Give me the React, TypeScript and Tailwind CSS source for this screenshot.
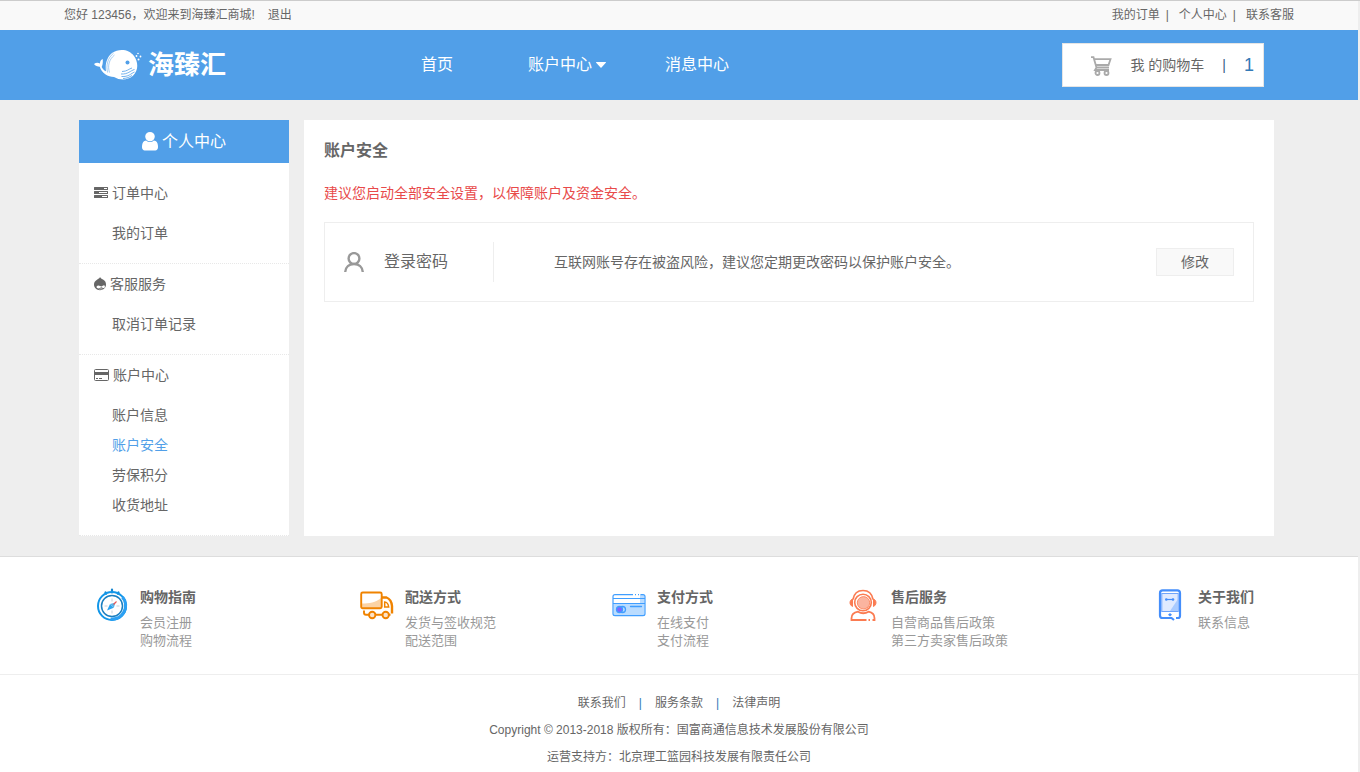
import type { ReactNode } from "react";

interface SideGroup {
  title: string;
  icon: ReactNode;
  items: string[];
}

interface HelpColumn {
  title: string;
  icon: ReactNode;
  links: string[];
}

const ACTIVE_ITEM = "账户安全";

function WhaleLogo() {
  return (
    <svg viewBox="0 0 48 32" className="w-12 h-8 shrink-0" fill="none" aria-hidden="true">
      <path
        d="M0 15c2-1.600 4.200-1.500 6-.5 0-2.200.8-3.600 2.700-4.500.4 3.500-.2 6-1 8 1.100 2.400 2.600 3.700 4.300 4.300C11 16 12.500 8.500 18 4 25-.8 35 0 40 7c4.500 6.300 4.500 14.500-1 19.700-5.500 4.800-13 4.700-19 1.200-6 0-12.500-3.900-14.200-10.200C3.500 17.300 1.200 17 0 15z"
        fill="#fff"
      />
      <path d="M13.600 23.500C11.800 17 13.500 9 19.500 4.300M15.500 23.500c-2-6.500-.6-13 5-17.500" stroke="#519fe8" strokeWidth=".5" />
      <circle cx="33.500" cy="13.500" r="2" fill="#519fe8" />
      <path
        d="M40.500 20.500c-4 1-6.500 5-13.500 4.500M40.500 23c-3.500 1.500-6 5-13 4.500M38 26.500c-2.500 1.500-5 3-9 3M38 19c-3 .8-5 3.500-10 3.500"
        stroke="#519fe8"
        strokeWidth=".8"
      />
      <circle cx="44" cy="4.500" r=".8" fill="#fff" />
      <circle cx="42.500" cy="7" r=".9" fill="#fff" />
      <circle cx="46.500" cy="7.500" r=".9" fill="#fff" />
      <circle cx="44.500" cy="10.500" r="1" fill="#fff" />
    </svg>
  );
}

function CartIcon() {
  return (
    <svg viewBox="0 -2 22 22" className="w-[22px] h-[22px] shrink-0" fill="none" stroke="#aaa" strokeWidth="1.800" aria-hidden="true">
      <path d="M1 1.200h2.500l3 10.300H19M4.500 3.200h16L18.500 9H6M6.500 11.500 5 14h14" />
      <circle cx="7.500" cy="17" r="2" />
      <circle cx="16.500" cy="17" r="2" />
    </svg>
  );
}

function UserSolidIcon() {
  return (
    <svg viewBox="256 128 1280 1664" className="w-4 h-5 shrink-0" fill="currentColor" preserveAspectRatio="none" aria-hidden="true">
      <path d="M1536 1399q0 109-62.500 187T1323 1664H469q-88 0-150.500-78T256 1399q0-85 8.500-160.500t31.500-152 58.500-131 94-89T583 832q131 128 313 128t313-128q76 0 134.500 34.500t94 89 58.500 131 31.500 152 8.500 160.500zm-256-887q0 159-112.500 271.500T896 896 624.500 783.500 512 512t112.500-271.500T896 128t271.500 112.500T1280 512z" />
    </svg>
  );
}

function TasksIcon() {
  return (
    <svg viewBox="0 0 14 14" className="w-[14px] h-[14px]" aria-hidden="true">
      <path
        d="M.5 1h13a.5.500 0 0 1 .5.500v2a.5.500 0 0 1-.5.500H.5a.5.500 0 0 1-.5-.5v-2A.5.500 0 0 1 .5 1zM.5 5h13a.5.500 0 0 1 .5.500v2a.5.500 0 0 1-.5.500H.5a.5.500 0 0 1-.5-.5v-2A.5.500 0 0 1 .5 5zM.5 9h13a.5.500 0 0 1 .5.500v2a.5.500 0 0 1-.5.500H.5a.5.500 0 0 1-.5-.5v-2A.5.500 0 0 1 .5 9z"
        fill="#666"
      />
      <path d="M10 2h3v1h-3zM5 6h8v1H5zM8 10h5v1H8z" fill="#fff" />
    </svg>
  );
}

function DropletIcon() {
  return (
    <svg viewBox="0 0 12 14" className="w-3 h-[14px]" fill="none" aria-hidden="true">
      <path d="M6 0c.6 1.400 1.600 1.700 3 2.600C11 3.900 12 5.300 12 7.500c0 3.200-2.700 5.700-6 5.700s-6-2.500-6-5.700c0-2.200 1.100-3.600 3-4.800C4.400 1.800 5.500 1.400 6 0z" fill="#666" />
      <path d="M2.600 10.300c-.2-1.200.7-1.900 1.700-1.900 1.500 0 2.200 1 3.100 1 .9 0 1.600-1.200 2.600-1.200.7 0 1 .8.9 1.500-.1.800-.6 1.300-1.200 1.300-.8 0-1.600-.8-2.300-.8s-1.700 1.200-3 1.200c-1 0-1.700-.4-1.800-1.100z" fill="#fff" />
      <path d="M5.300 12.300c1-.6 2.400-.6 3.200-.2" stroke="#fff" strokeWidth=".6" />
    </svg>
  );
}

function CreditCardIcon() {
  return (
    <svg viewBox="0 0 15 14" className="w-[15px] h-[14px]" fill="none" aria-hidden="true">
      <rect x=".5" y="1.500" width="14" height="11" rx="1" stroke="#666" />
      <path d="M1 4h13v3H1zM2 10h2v1H2zM5 10h3v1H5z" fill="#666" />
    </svg>
  );
}

function UserOutlineIcon() {
  return (
    <svg viewBox="0 0 20 20" className="w-5 h-5 shrink-0" fill="none" stroke="#999" strokeWidth="2.400" aria-hidden="true">
      <circle cx="10" cy="6.500" r="5.400" />
      <path d="M1.200 20c.3-5 4-8 8.800-8s8.500 3 8.800 8" />
    </svg>
  );
}

function CompassIcon() {
  return (
    <svg viewBox="0 0 32 34" className="w-8 h-[34px]" fill="none" aria-hidden="true">
      <path d="M16 1.500v3M9.500 4.500l.6 1.200M22.500 4.500l-.6 1.200" stroke="#1787cf" strokeWidth="2.200" strokeLinecap="round" />
      <circle cx="16" cy="18" r="14" stroke="#1296e8" strokeWidth="2" />
      <path d="M26.500 9a13.500 13.500 0 0 1-12 22" stroke="#2ba0f3" strokeWidth="3.200" />
      <circle cx="16" cy="18" r="10.500" fill="#fff" stroke="#1a7fc0" strokeWidth="1.500" />
      <path d="M16 10.500v3M16 22.500v3M8.500 18h3M20.500 18h3" stroke="#c3d0d9" />
      <path d="m11 22.500 3-6.500 3.800 3.800z" fill="#2da4ef" />
      <path d="m19.500 14.500-5.500 1.500 3.800 3.800z" fill="#56b3e9" />
      <path d="m17.500 16.500 3-3" stroke="#f0544f" strokeWidth="1.100" />
    </svg>
  );
}

function TruckIcon() {
  return (
    <svg viewBox="0 0 34 30" className="w-[34px] h-[30px]" fill="none" stroke="#f08300" strokeWidth="1.900" aria-hidden="true">
      <path d="M2 13.500C9 13.500 16 12.500 21 8v10H2z" fill="#fbd3a5" stroke="none" />
      <rect x="1.200" y="2.500" width="20.500" height="15.800" rx="1.500" />
      <path d="M21.700 7.500h4.800c3.200 1.200 5.200 5 5.500 8.500V23.500" strokeWidth="2.400" />
      <path d="M24.700 17v-5c2 0 3.700 2.500 4 5z" strokeWidth="1.500" />
      <path d="M4 20.500v2.300c0 1.200.7 2 2 2h3M15.500 24.800h7M29 24.800h1.500" />
      <circle cx="12.200" cy="25" r="3.200" fill="#fde3c8" />
      <circle cx="25.700" cy="25" r="3.200" fill="#fde3c8" />
    </svg>
  );
}

function PaymentIcon() {
  return (
    <svg viewBox="0 0 34 24" className="w-[34px] h-6" fill="none" aria-hidden="true">
      <path d="M1.500 10.500h31V21c0 1-.6 1.600-1.500 1.600H3c-1 0-1.500-.6-1.500-1.600z" fill="#badcff" />
      <path d="M28 1.500h4.500V10H28z" fill="#badcff" />
      <path d="M21 1.700H3C1.700 1.700 1 2.300 1 3.500v17.300c0 1.300.8 1.900 2 1.900h28c1.300 0 2-.6 2-1.900V3.500c0-1.200-.8-1.800-2-1.800h-2.500M23 1.700h1M26 1.700h1M1 5.500h32M1 10.500h32" stroke="#409eff" strokeWidth="1.200" />
      <circle cx="10.500" cy="16.500" r="3" fill="#badcff" stroke="#409eff" strokeWidth="1.300" />
      <circle cx="7.500" cy="16.500" r="3" fill="#8064ff" stroke="#409eff" strokeWidth="1.300" />
      <path d="M18.500 13.500h11" stroke="#409eff" strokeWidth="1.300" strokeLinecap="round" />
    </svg>
  );
}

function SupportIcon() {
  return (
    <svg viewBox="0 0 28 32" className="w-7 h-8" fill="none" stroke="#fb7b51" aria-hidden="true">
      <path d="M4 10.500C5 4.500 9 1.500 14 1.500s9 3 10 9" strokeWidth="1.700" />
      <path d="M3.500 10c-3.300 1.200-3.300 6 0 7.500zM24.500 10c3.300 1.200 3.300 6 0 7.500z" fill="#fb7b51" />
      <circle cx="14" cy="13.500" r="8.300" strokeWidth="1.600" />
      <circle cx="14.500" cy="13.800" r="6.200" fill="#fbb49f" strokeWidth=".8" />
      <path d="M17.500 31H2.500v-1.800c0-3.600 2.500-5.700 6.500-6.500 3 1.800 7.500 1.800 10.500 0 4 .8 6 2.900 6 6.500V31h-2M19.500 31H21" strokeWidth="1.800" />
    </svg>
  );
}

function PhoneIcon() {
  return (
    <svg viewBox="0 0 24 32" className="w-6 h-8" fill="none" aria-hidden="true">
      <rect x="3.800" y="4.500" width="16.400" height="18" fill="#dfeaff" stroke="#6ea4fb" />
      <path d="M20 10v12h-8z" fill="#a9cbff" />
      <path d="M18 29h2c1.300 0 2-.7 2-2V4c0-1.800-.8-2.600-2.600-2.600H4.600C2.800 1.400 2 2.200 2 4v22.400C2 28.200 2.800 29 4.600 29h8.900l2.500 2" stroke="#448efb" strokeWidth="2.200" />
      <path d="M8 10.500h8" stroke="#448efb" strokeWidth="1.200" />
      <circle cx="8.300" cy="10.500" r="1.300" fill="#448efb" />
      <circle cx="15" cy="10.500" r="1.300" fill="#448efb" />
      <path d="m12 24 2 1.700-2 1.700-2-1.700z" fill="#448efb" />
    </svg>
  );
}

const sideGroups: SideGroup[] = [
  { title: "订单中心", icon: <TasksIcon />, items: ["我的订单"] },
  { title: "客服服务", icon: <DropletIcon />, items: ["取消订单记录"] },
  { title: "账户中心", icon: <CreditCardIcon />, items: ["账户信息", "账户安全", "劳保积分", "收货地址"] },
];

const helpColumns: HelpColumn[] = [
  { title: "购物指南", icon: <CompassIcon />, links: ["会员注册", "购物流程"] },
  { title: "配送方式", icon: <TruckIcon />, links: ["发货与签收规范", "配送范围"] },
  { title: "支付方式", icon: <PaymentIcon />, links: ["在线支付", "支付流程"] },
  { title: "售后服务", icon: <SupportIcon />, links: ["自营商品售后政策", "第三方卖家售后政策"] },
  { title: "关于我们", icon: <PhoneIcon />, links: ["联系信息"] },
];

function TopBar() {
  return (
    <div className="bg-[#f9f9f9]">
      <div className="max-w-[1230px] mx-auto flex justify-between text-xs leading-7 pb-px">
        <div className="flex gap-[13px]">
          <span>您好 123456，欢迎来到海臻汇商城!</span>
          <a href="#">退出</a>
        </div>
        <div className="flex">
          <a href="#">我的订单</a>
          <span className="pl-[6px] pr-[10px]">|</span>
          <a href="#">个人中心</a>
          <span className="pl-[6px] pr-[10px]">|</span>
          <a href="#">联系客服</a>
        </div>
      </div>
    </div>
  );
}

function Header() {
  return (
    <header className="bg-[#519fe8] text-white">
      <div className="max-w-[1200px] mx-auto px-[15px] h-[70px] flex items-center">
        <a href="#" className="flex items-center gap-[6px] w-[327px]">
          <WhaleLogo />
          <span className="text-[26px] leading-8 font-bold">海臻汇</span>
        </a>
        <nav className="flex text-base leading-6">
          <a href="#" className="mr-[75px]">首页</a>
          <a href="#" className="mr-[59px] flex items-center gap-1">
            账户中心
            <svg viewBox="0 0 10 6" className="w-[10px] h-[6px]" fill="currentColor" aria-hidden="true">
              <path d="M.5 0h9c.5 0 .6.400.3.700L5.500 5.600c-.3.300-.7.300-1 0L.2.700C-.1.400 0 0 .5 0z" />
            </svg>
          </a>
          <a href="#">消息中心</a>
        </nav>
        <a href="#" className="ml-auto w-[202px] h-11 pr-[9px] bg-white border border-[#e5e5e5] flex items-center justify-end text-sm text-[#666]">
          <CartIcon />
          <span className="ml-[18px]">我 的购物车</span>
          <span className="mx-[18px] text-[#3a5f85]">|</span>
          <span className="text-lg text-[#337ab7]">1</span>
        </a>
      </div>
    </header>
  );
}

function Sidebar() {
  return (
    <aside className="w-[210px] shrink-0 self-start bg-white">
      <h2 className="h-[43px] bg-[#519fe8] text-white text-base flex items-center justify-center gap-1">
        <UserSolidIcon />
        个人中心
      </h2>
      <div className="pt-[10px]">
        {sideGroups.map((group) => (
          <section key={group.title} className="pb-[15px] border-b border-dotted border-[#e8e8e8]">
            <h3 className="pl-[15px] h-10 mb-[5px] flex items-center gap-1 text-sm">
              {group.icon}
              {group.title}
            </h3>
            <ul>
              {group.items.map((item) => (
                <li key={item} className="pl-[33px] text-sm leading-[30px]">
                  <a href="#" className={item === ACTIVE_ITEM ? "text-[#519fe8]" : ""}>
                    {item}
                  </a>
                </li>
              ))}
            </ul>
          </section>
        ))}
      </div>
    </aside>
  );
}

function SecurityPanel() {
  return (
    <main className="flex-1 bg-white px-5 pt-4">
      <h1 className="text-base leading-[30px] font-bold">{ACTIVE_ITEM}</h1>
      <p className="mt-[14px] mb-4 text-sm leading-[26px] text-[#e84a4a]">建议您启动全部安全设置，以保障账户及资金安全。</p>
      <div className="border border-[#eee] px-[19px] py-[19px] flex items-center">
        <div className="w-[150px] h-10 border-r border-[#eee] flex items-center gap-5">
          <UserOutlineIcon />
          <span className="text-base">登录密码</span>
        </div>
        <p className="flex-1 pl-[60px] text-sm leading-[21px]">互联网账号存在被盗风险，建议您定期更改密码以保护账户安全。</p>
        <button type="button" className="w-[78px] h-7 bg-[#f9f9f9] border border-[#eee] text-sm leading-[21px]">
          修改
        </button>
      </div>
    </main>
  );
}

function Footer() {
  return (
    <footer className="bg-white border-t border-[#ddd]">
      <div className="border-b border-[#eee]">
        <div className="max-w-[1200px] mx-auto pl-4 pr-[25px] pt-[31px] pb-6 grid grid-cols-[265fr_252fr_234fr_307fr_101fr]">
          {helpColumns.map((col) => (
            <div key={col.title} className="flex gap-[11px]">
              <div className="w-[34px] h-[34px] shrink-0 flex items-center justify-center">{col.icon}</div>
              <div className="whitespace-nowrap">
                <h4 className="text-sm leading-[18px] mb-2 font-bold">{col.title}</h4>
                <ul className="text-[13px] leading-[18px] text-[#999]">
                  {col.links.map((link) => (
                    <li key={link}>
                      <a href="#">{link}</a>
                    </li>
                  ))}
                </ul>
              </div>
            </div>
          ))}
        </div>
      </div>
      <div className="pt-[15px] text-center text-xs leading-[27px]">
        <div className="flex justify-center gap-[13px]">
          <a href="#">联系我们</a>
          <span className="text-[#337ab7]">|</span>
          <a href="#">服务条款</a>
          <span className="text-[#337ab7]">|</span>
          <a href="#">法律声明</a>
        </div>
        <p>Copyright © 2013-2018 版权所有：国富商通信息技术发展股份有限公司</p>
        <p>运营支持方：北京理工篮园科技发展有限责任公司</p>
      </div>
    </footer>
  );
}

export default function App() {
  return (
    <div
      lang="zh-CN"
      className="min-h-screen bg-[#eee] border-t border-[#ccc] pr-[2px] flex flex-col text-[#666] font-['Liberation_Sans','Noto_Sans_CJK_SC',sans-serif]"
    >
      <TopBar />
      <Header />
      <div className="w-full max-w-[1200px] mx-auto pr-[5px] py-5 flex gap-[15px]">
        <Sidebar />
        <SecurityPanel />
      </div>
      <div className="flex-1 bg-white">
        <Footer />
      </div>
    </div>
  );
}
